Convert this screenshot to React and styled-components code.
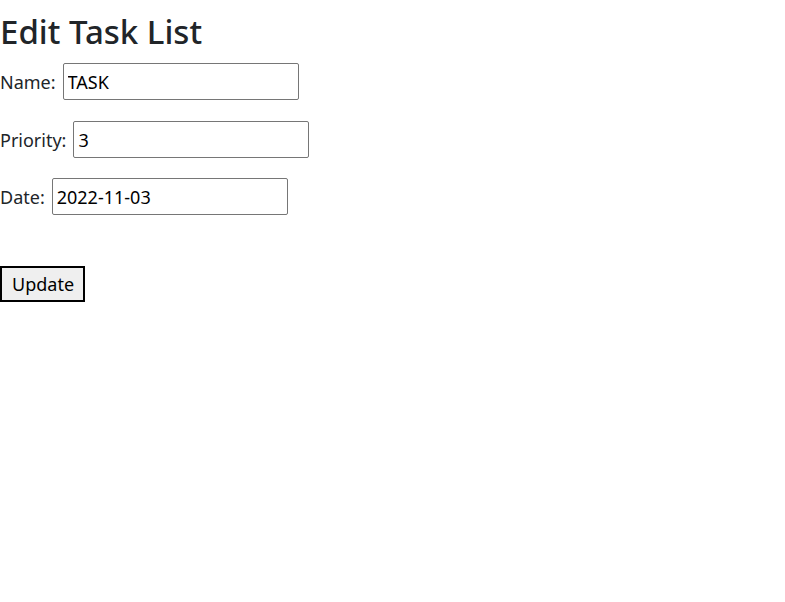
import React from 'react'
import styled, { createGlobalStyle } from 'styled-components'

const GlobalStyle = createGlobalStyle`
  body {
    margin: 0;
    background: #fff;
    color: #212529;
    font-family: 'Noto Sans', 'Open Sans', sans-serif;
  }
`

const Page = styled.div`
  display: flex;
  flex-direction: column;
  align-items: flex-start;
`

const Title = styled.h1`
  font-size: 33px;
  font-weight: 500;
  line-height: 40px;
  margin: 12px 0 11px 0;
  color: #212529;
`

const EditForm = styled.form`
  display: flex;
  flex-direction: column;
  align-items: flex-start;
`

const FieldRow = styled.div`
  display: flex;
  align-items: center;
  height: 37px;
  margin-bottom: ${props => props.gap || '21px'};
  font-size: 18px;
  color: #212529;
`

const FieldLabel = styled.label`
  margin-right: 7px;
`

const TextInput = styled.input`
  box-sizing: border-box;
  width: 236px;
  height: 37px;
  padding: 0 4px;
  border: 1px solid #767676;
  border-radius: 2px;
  font-family: inherit;
  font-size: 18px;
  color: #000;
`

const UpdateButton = styled.button`
  box-sizing: border-box;
  height: 36px;
  padding: 0 9px 0 10px;
  margin-top: 51px;
  background: #efefef;
  border: 2px solid #000;
  border-radius: 0;
  font-family: inherit;
  font-size: 18px;
  color: #000;
`

const App = () => {
  return (
    <>
      <GlobalStyle />
      <Page>
        <Title>Edit Task List</Title>
        <EditForm onSubmit={e => e.preventDefault()}>
          <FieldRow>
            <FieldLabel>Name:</FieldLabel>
            <TextInput type="text" defaultValue="TASK" />
          </FieldRow>
          <FieldRow gap={'20px'}>
            <FieldLabel>Priority:</FieldLabel>
            <TextInput type="text" defaultValue="3" />
          </FieldRow>
          <FieldRow gap={'0px'}>
            <FieldLabel>Date:</FieldLabel>
            <TextInput type="text" defaultValue="2022-11-03" />
          </FieldRow>
          <UpdateButton type="submit">Update</UpdateButton>
        </EditForm>
      </Page>
    </>
  )
}

export default App
